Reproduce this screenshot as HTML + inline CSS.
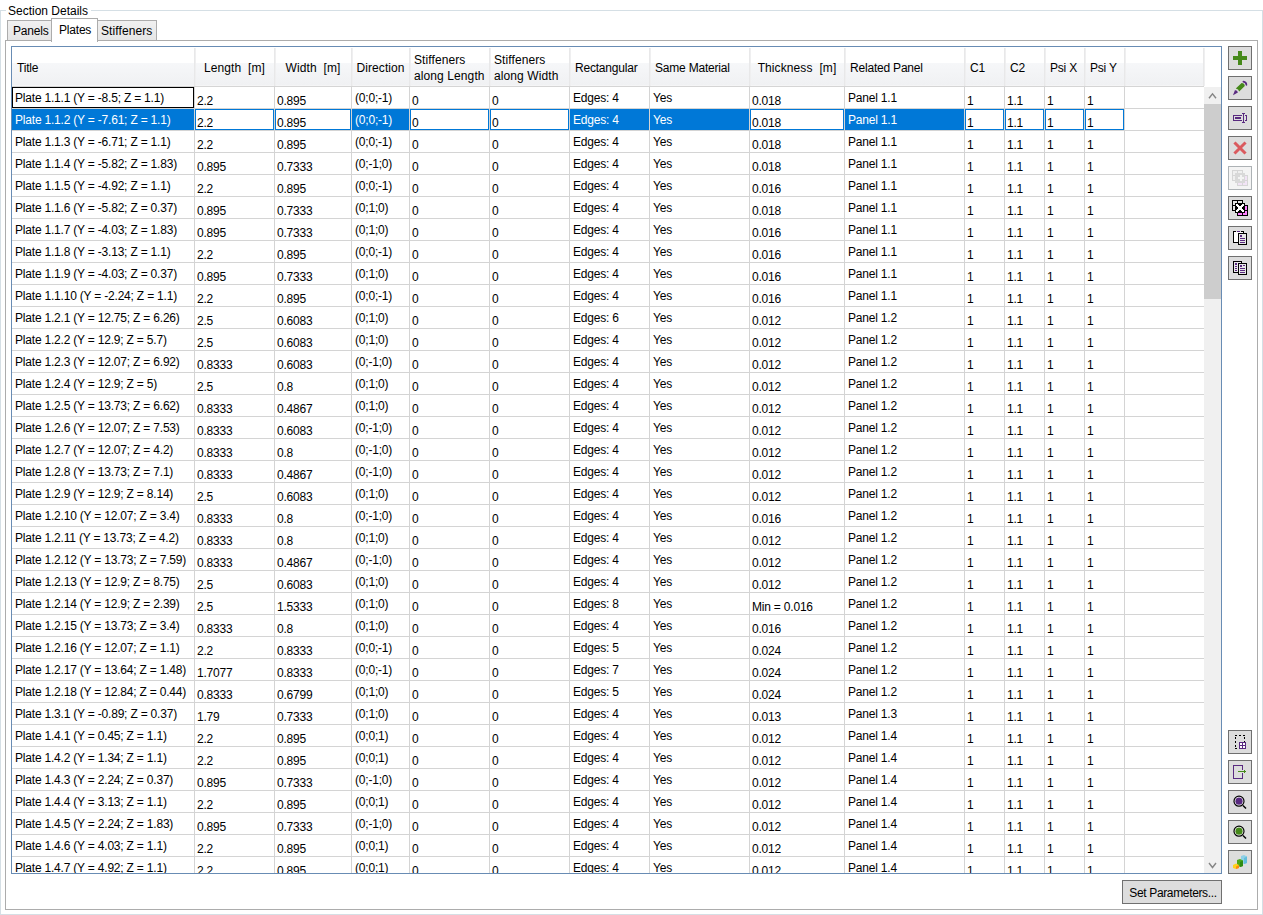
<!DOCTYPE html><html><head><meta charset="utf-8"><style>
*{margin:0;padding:0;box-sizing:border-box}
html,body{width:1263px;height:915px;overflow:hidden;background:#fff}
body{position:relative;font-family:"Liberation Sans",sans-serif;font-size:12px;color:#000}
.a{position:absolute}
.t{position:absolute;white-space:pre;line-height:14px;letter-spacing:-0.2px}
.gl{position:absolute;background:#d4d4d4}
.hs{position:absolute;top:48px;height:38px;width:1px;background:#e8e8e9}
.btn{position:absolute;left:1228px;width:24px;height:24px;border:1px solid #6f6f6f;background:#dddddd}
.btn svg{position:absolute;left:-1px;top:-1px}
</style></head><body><div class="a" style="left:0;top:10px;width:1263px;height:905px;border:1px solid #d5dfe5"></div>
<div class="a" style="left:6px;top:3px;width:85px;height:16px;background:#fff"></div>
<div class="t" style="left:8px;top:4px;letter-spacing:0">Section Details</div>
<div class="a" style="left:5px;top:40px;width:1253px;height:870px;border:1px solid #acacac;background:#fff"></div>
<div class="a" style="left:7px;top:20px;width:45px;height:21px;border:1px solid #acacac;background:linear-gradient(#f0f0f0,#e6e6e6)"></div>
<div class="t" style="left:13px;top:24px">Panels</div>
<div class="a" style="left:97px;top:20px;width:60px;height:21px;border:1px solid #acacac;background:linear-gradient(#f0f0f0,#e6e6e6)"></div>
<div class="t" style="left:101px;top:24px;letter-spacing:0.1px">Stiffeners</div>
<div class="a" style="left:51px;top:18px;width:47px;height:24px;border:1px solid #acacac;border-bottom:none;background:#fff"></div>
<div class="t" style="left:59px;top:23px">Plates</div>
<div class="a" style="left:11px;top:46px;width:1211px;height:828px;border:1px solid #688cb4;background:#fff"></div>
<div class="a" style="left:12px;top:63px;width:1192px;height:22px;background:linear-gradient(#f6f7f9,#f0f1f3)"></div>
<div class="a" style="left:12px;top:85px;width:1192px;height:1px;background:#f5f5f6"></div>
<div class="a" style="left:12px;top:86px;width:1192px;height:1px;background:#d5d5d5"></div>
<div class="hs" style="left:194px"></div><div class="hs" style="left:195px;background:#efeff0"></div>
<div class="hs" style="left:274px"></div><div class="hs" style="left:275px;background:#efeff0"></div>
<div class="hs" style="left:351px"></div><div class="hs" style="left:352px;background:#efeff0"></div>
<div class="hs" style="left:409px"></div><div class="hs" style="left:410px;background:#efeff0"></div>
<div class="hs" style="left:489px"></div><div class="hs" style="left:490px;background:#efeff0"></div>
<div class="hs" style="left:569px"></div><div class="hs" style="left:570px;background:#efeff0"></div>
<div class="hs" style="left:649px"></div><div class="hs" style="left:650px;background:#efeff0"></div>
<div class="hs" style="left:749px"></div><div class="hs" style="left:750px;background:#efeff0"></div>
<div class="hs" style="left:844px"></div><div class="hs" style="left:845px;background:#efeff0"></div>
<div class="hs" style="left:964px"></div><div class="hs" style="left:965px;background:#efeff0"></div>
<div class="hs" style="left:1004px"></div><div class="hs" style="left:1005px;background:#efeff0"></div>
<div class="hs" style="left:1044px"></div><div class="hs" style="left:1045px;background:#efeff0"></div>
<div class="hs" style="left:1084px"></div><div class="hs" style="left:1085px;background:#efeff0"></div>
<div class="hs" style="left:1124px"></div><div class="hs" style="left:1125px;background:#efeff0"></div>
<div class="hs" style="left:1203px"></div><div class="hs" style="left:1204px;background:#efeff0"></div>
<div class="t" style="left:17px;top:61px">Title</div>
<div class="t" style="left:195px;width:79px;text-align:center;top:61px;letter-spacing:0.1px">Length&nbsp;&nbsp;[m]</div>
<div class="t" style="left:275px;width:76px;text-align:center;top:61px;letter-spacing:0.1px">Width&nbsp;&nbsp;[m]</div>
<div class="t" style="left:352px;width:57px;text-align:center;top:61px;letter-spacing:0.1px">Direction</div>
<div class="t" style="left:414px;top:52px;line-height:16px;letter-spacing:0.1px">Stiffeners<br>along Length</div>
<div class="t" style="left:494px;top:52px;line-height:16px;letter-spacing:0.1px">Stiffeners<br>along Width</div>
<div class="t" style="left:575px;top:61px">Rectangular</div>
<div class="t" style="left:655px;top:61px">Same Material</div>
<div class="t" style="left:750px;width:94px;text-align:center;top:61px;letter-spacing:0.1px">Thickness&nbsp;&nbsp;[m]</div>
<div class="t" style="left:850px;top:61px">Related Panel</div>
<div class="t" style="left:970px;top:61px">C1</div>
<div class="t" style="left:1010px;top:61px">C2</div>
<div class="t" style="left:1050px;top:61px">Psi X</div>
<div class="t" style="left:1090px;top:61px">Psi Y</div>
<div class="gl" style="left:12px;top:108px;width:1192px;height:1px"></div>
<div class="gl" style="left:12px;top:130px;width:1192px;height:1px"></div>
<div class="gl" style="left:12px;top:152px;width:1192px;height:1px"></div>
<div class="gl" style="left:12px;top:174px;width:1192px;height:1px"></div>
<div class="gl" style="left:12px;top:196px;width:1192px;height:1px"></div>
<div class="gl" style="left:12px;top:218px;width:1192px;height:1px"></div>
<div class="gl" style="left:12px;top:240px;width:1192px;height:1px"></div>
<div class="gl" style="left:12px;top:262px;width:1192px;height:1px"></div>
<div class="gl" style="left:12px;top:284px;width:1192px;height:1px"></div>
<div class="gl" style="left:12px;top:306px;width:1192px;height:1px"></div>
<div class="gl" style="left:12px;top:328px;width:1192px;height:1px"></div>
<div class="gl" style="left:12px;top:350px;width:1192px;height:1px"></div>
<div class="gl" style="left:12px;top:372px;width:1192px;height:1px"></div>
<div class="gl" style="left:12px;top:394px;width:1192px;height:1px"></div>
<div class="gl" style="left:12px;top:416px;width:1192px;height:1px"></div>
<div class="gl" style="left:12px;top:438px;width:1192px;height:1px"></div>
<div class="gl" style="left:12px;top:460px;width:1192px;height:1px"></div>
<div class="gl" style="left:12px;top:482px;width:1192px;height:1px"></div>
<div class="gl" style="left:12px;top:504px;width:1192px;height:1px"></div>
<div class="gl" style="left:12px;top:526px;width:1192px;height:1px"></div>
<div class="gl" style="left:12px;top:548px;width:1192px;height:1px"></div>
<div class="gl" style="left:12px;top:570px;width:1192px;height:1px"></div>
<div class="gl" style="left:12px;top:592px;width:1192px;height:1px"></div>
<div class="gl" style="left:12px;top:614px;width:1192px;height:1px"></div>
<div class="gl" style="left:12px;top:636px;width:1192px;height:1px"></div>
<div class="gl" style="left:12px;top:658px;width:1192px;height:1px"></div>
<div class="gl" style="left:12px;top:680px;width:1192px;height:1px"></div>
<div class="gl" style="left:12px;top:702px;width:1192px;height:1px"></div>
<div class="gl" style="left:12px;top:724px;width:1192px;height:1px"></div>
<div class="gl" style="left:12px;top:746px;width:1192px;height:1px"></div>
<div class="gl" style="left:12px;top:768px;width:1192px;height:1px"></div>
<div class="gl" style="left:12px;top:790px;width:1192px;height:1px"></div>
<div class="gl" style="left:12px;top:812px;width:1192px;height:1px"></div>
<div class="gl" style="left:12px;top:834px;width:1192px;height:1px"></div>
<div class="gl" style="left:12px;top:856px;width:1192px;height:1px"></div>
<div class="gl" style="left:194px;top:87px;width:1px;height:786px"></div>
<div class="gl" style="left:274px;top:87px;width:1px;height:786px"></div>
<div class="gl" style="left:351px;top:87px;width:1px;height:786px"></div>
<div class="gl" style="left:409px;top:87px;width:1px;height:786px"></div>
<div class="gl" style="left:489px;top:87px;width:1px;height:786px"></div>
<div class="gl" style="left:569px;top:87px;width:1px;height:786px"></div>
<div class="gl" style="left:649px;top:87px;width:1px;height:786px"></div>
<div class="gl" style="left:749px;top:87px;width:1px;height:786px"></div>
<div class="gl" style="left:844px;top:87px;width:1px;height:786px"></div>
<div class="gl" style="left:964px;top:87px;width:1px;height:786px"></div>
<div class="gl" style="left:1004px;top:87px;width:1px;height:786px"></div>
<div class="gl" style="left:1044px;top:87px;width:1px;height:786px"></div>
<div class="gl" style="left:1084px;top:87px;width:1px;height:786px"></div>
<div class="gl" style="left:1124px;top:87px;width:1px;height:786px"></div>
<div class="a" style="left:12px;top:109px;width:182px;height:21px;background:#0078d7"></div>
<div class="a" style="left:352px;top:109px;width:57px;height:21px;background:#0078d7"></div>
<div class="a" style="left:570px;top:109px;width:79px;height:21px;background:#0078d7"></div>
<div class="a" style="left:650px;top:109px;width:99px;height:21px;background:#0078d7"></div>
<div class="a" style="left:845px;top:109px;width:119px;height:21px;background:#0078d7"></div>
<div class="a" style="left:195px;top:109px;width:79px;height:21px;border:1px solid #0078d7;background:#fff"></div>
<div class="a" style="left:275px;top:109px;width:76px;height:21px;border:1px solid #0078d7;background:#fff"></div>
<div class="a" style="left:410px;top:109px;width:79px;height:21px;border:1px solid #0078d7;background:#fff"></div>
<div class="a" style="left:490px;top:109px;width:79px;height:21px;border:1px solid #0078d7;background:#fff"></div>
<div class="a" style="left:750px;top:109px;width:94px;height:21px;border:1px solid #0078d7;background:#fff"></div>
<div class="a" style="left:965px;top:109px;width:39px;height:21px;border:1px solid #0078d7;background:#fff"></div>
<div class="a" style="left:1005px;top:109px;width:39px;height:21px;border:1px solid #0078d7;background:#fff"></div>
<div class="a" style="left:1045px;top:109px;width:39px;height:21px;border:1px solid #0078d7;background:#fff"></div>
<div class="a" style="left:1085px;top:109px;width:39px;height:21px;border:1px solid #0078d7;background:#fff"></div>
<div class="a" style="left:12px;top:87px;width:182px;height:21px;border:1px solid #000"></div>
<div class="t" style="left:15px;top:91px;color:#000">Plate 1.1.1 (Y = -8.5; Z = 1.1)</div>
<div class="t" style="left:197px;top:94px;color:#000">2.2</div>
<div class="t" style="left:277px;top:94px;color:#000">0.895</div>
<div class="t" style="left:355px;top:91px;color:#000">(0;0;-1)</div>
<div class="t" style="left:412px;top:94px;color:#000">0</div>
<div class="t" style="left:492px;top:94px;color:#000">0</div>
<div class="t" style="left:573px;top:91px;color:#000">Edges: 4</div>
<div class="t" style="left:653px;top:91px;color:#000">Yes</div>
<div class="t" style="left:752px;top:94px;color:#000">0.018</div>
<div class="t" style="left:848px;top:91px;color:#000">Panel 1.1</div>
<div class="t" style="left:967px;top:94px;color:#000">1</div>
<div class="t" style="left:1007px;top:94px;color:#000">1.1</div>
<div class="t" style="left:1047px;top:94px;color:#000">1</div>
<div class="t" style="left:1087px;top:94px;color:#000">1</div>
<div class="t" style="left:15px;top:113px;color:#fff">Plate 1.1.2 (Y = -7.61; Z = 1.1)</div>
<div class="t" style="left:197px;top:116px;color:#000">2.2</div>
<div class="t" style="left:277px;top:116px;color:#000">0.895</div>
<div class="t" style="left:355px;top:113px;color:#fff">(0;0;-1)</div>
<div class="t" style="left:412px;top:116px;color:#000">0</div>
<div class="t" style="left:492px;top:116px;color:#000">0</div>
<div class="t" style="left:573px;top:113px;color:#fff">Edges: 4</div>
<div class="t" style="left:653px;top:113px;color:#fff">Yes</div>
<div class="t" style="left:752px;top:116px;color:#000">0.018</div>
<div class="t" style="left:848px;top:113px;color:#fff">Panel 1.1</div>
<div class="t" style="left:967px;top:116px;color:#000">1</div>
<div class="t" style="left:1007px;top:116px;color:#000">1.1</div>
<div class="t" style="left:1047px;top:116px;color:#000">1</div>
<div class="t" style="left:1087px;top:116px;color:#000">1</div>
<div class="t" style="left:15px;top:135px;color:#000">Plate 1.1.3 (Y = -6.71; Z = 1.1)</div>
<div class="t" style="left:197px;top:138px;color:#000">2.2</div>
<div class="t" style="left:277px;top:138px;color:#000">0.895</div>
<div class="t" style="left:355px;top:135px;color:#000">(0;0;-1)</div>
<div class="t" style="left:412px;top:138px;color:#000">0</div>
<div class="t" style="left:492px;top:138px;color:#000">0</div>
<div class="t" style="left:573px;top:135px;color:#000">Edges: 4</div>
<div class="t" style="left:653px;top:135px;color:#000">Yes</div>
<div class="t" style="left:752px;top:138px;color:#000">0.018</div>
<div class="t" style="left:848px;top:135px;color:#000">Panel 1.1</div>
<div class="t" style="left:967px;top:138px;color:#000">1</div>
<div class="t" style="left:1007px;top:138px;color:#000">1.1</div>
<div class="t" style="left:1047px;top:138px;color:#000">1</div>
<div class="t" style="left:1087px;top:138px;color:#000">1</div>
<div class="t" style="left:15px;top:157px;color:#000">Plate 1.1.4 (Y = -5.82; Z = 1.83)</div>
<div class="t" style="left:197px;top:160px;color:#000">0.895</div>
<div class="t" style="left:277px;top:160px;color:#000">0.7333</div>
<div class="t" style="left:355px;top:157px;color:#000">(0;-1;0)</div>
<div class="t" style="left:412px;top:160px;color:#000">0</div>
<div class="t" style="left:492px;top:160px;color:#000">0</div>
<div class="t" style="left:573px;top:157px;color:#000">Edges: 4</div>
<div class="t" style="left:653px;top:157px;color:#000">Yes</div>
<div class="t" style="left:752px;top:160px;color:#000">0.018</div>
<div class="t" style="left:848px;top:157px;color:#000">Panel 1.1</div>
<div class="t" style="left:967px;top:160px;color:#000">1</div>
<div class="t" style="left:1007px;top:160px;color:#000">1.1</div>
<div class="t" style="left:1047px;top:160px;color:#000">1</div>
<div class="t" style="left:1087px;top:160px;color:#000">1</div>
<div class="t" style="left:15px;top:179px;color:#000">Plate 1.1.5 (Y = -4.92; Z = 1.1)</div>
<div class="t" style="left:197px;top:182px;color:#000">2.2</div>
<div class="t" style="left:277px;top:182px;color:#000">0.895</div>
<div class="t" style="left:355px;top:179px;color:#000">(0;0;-1)</div>
<div class="t" style="left:412px;top:182px;color:#000">0</div>
<div class="t" style="left:492px;top:182px;color:#000">0</div>
<div class="t" style="left:573px;top:179px;color:#000">Edges: 4</div>
<div class="t" style="left:653px;top:179px;color:#000">Yes</div>
<div class="t" style="left:752px;top:182px;color:#000">0.016</div>
<div class="t" style="left:848px;top:179px;color:#000">Panel 1.1</div>
<div class="t" style="left:967px;top:182px;color:#000">1</div>
<div class="t" style="left:1007px;top:182px;color:#000">1.1</div>
<div class="t" style="left:1047px;top:182px;color:#000">1</div>
<div class="t" style="left:1087px;top:182px;color:#000">1</div>
<div class="t" style="left:15px;top:201px;color:#000">Plate 1.1.6 (Y = -5.82; Z = 0.37)</div>
<div class="t" style="left:197px;top:204px;color:#000">0.895</div>
<div class="t" style="left:277px;top:204px;color:#000">0.7333</div>
<div class="t" style="left:355px;top:201px;color:#000">(0;1;0)</div>
<div class="t" style="left:412px;top:204px;color:#000">0</div>
<div class="t" style="left:492px;top:204px;color:#000">0</div>
<div class="t" style="left:573px;top:201px;color:#000">Edges: 4</div>
<div class="t" style="left:653px;top:201px;color:#000">Yes</div>
<div class="t" style="left:752px;top:204px;color:#000">0.018</div>
<div class="t" style="left:848px;top:201px;color:#000">Panel 1.1</div>
<div class="t" style="left:967px;top:204px;color:#000">1</div>
<div class="t" style="left:1007px;top:204px;color:#000">1.1</div>
<div class="t" style="left:1047px;top:204px;color:#000">1</div>
<div class="t" style="left:1087px;top:204px;color:#000">1</div>
<div class="t" style="left:15px;top:223px;color:#000">Plate 1.1.7 (Y = -4.03; Z = 1.83)</div>
<div class="t" style="left:197px;top:226px;color:#000">0.895</div>
<div class="t" style="left:277px;top:226px;color:#000">0.7333</div>
<div class="t" style="left:355px;top:223px;color:#000">(0;1;0)</div>
<div class="t" style="left:412px;top:226px;color:#000">0</div>
<div class="t" style="left:492px;top:226px;color:#000">0</div>
<div class="t" style="left:573px;top:223px;color:#000">Edges: 4</div>
<div class="t" style="left:653px;top:223px;color:#000">Yes</div>
<div class="t" style="left:752px;top:226px;color:#000">0.016</div>
<div class="t" style="left:848px;top:223px;color:#000">Panel 1.1</div>
<div class="t" style="left:967px;top:226px;color:#000">1</div>
<div class="t" style="left:1007px;top:226px;color:#000">1.1</div>
<div class="t" style="left:1047px;top:226px;color:#000">1</div>
<div class="t" style="left:1087px;top:226px;color:#000">1</div>
<div class="t" style="left:15px;top:245px;color:#000">Plate 1.1.8 (Y = -3.13; Z = 1.1)</div>
<div class="t" style="left:197px;top:248px;color:#000">2.2</div>
<div class="t" style="left:277px;top:248px;color:#000">0.895</div>
<div class="t" style="left:355px;top:245px;color:#000">(0;0;-1)</div>
<div class="t" style="left:412px;top:248px;color:#000">0</div>
<div class="t" style="left:492px;top:248px;color:#000">0</div>
<div class="t" style="left:573px;top:245px;color:#000">Edges: 4</div>
<div class="t" style="left:653px;top:245px;color:#000">Yes</div>
<div class="t" style="left:752px;top:248px;color:#000">0.016</div>
<div class="t" style="left:848px;top:245px;color:#000">Panel 1.1</div>
<div class="t" style="left:967px;top:248px;color:#000">1</div>
<div class="t" style="left:1007px;top:248px;color:#000">1.1</div>
<div class="t" style="left:1047px;top:248px;color:#000">1</div>
<div class="t" style="left:1087px;top:248px;color:#000">1</div>
<div class="t" style="left:15px;top:267px;color:#000">Plate 1.1.9 (Y = -4.03; Z = 0.37)</div>
<div class="t" style="left:197px;top:270px;color:#000">0.895</div>
<div class="t" style="left:277px;top:270px;color:#000">0.7333</div>
<div class="t" style="left:355px;top:267px;color:#000">(0;1;0)</div>
<div class="t" style="left:412px;top:270px;color:#000">0</div>
<div class="t" style="left:492px;top:270px;color:#000">0</div>
<div class="t" style="left:573px;top:267px;color:#000">Edges: 4</div>
<div class="t" style="left:653px;top:267px;color:#000">Yes</div>
<div class="t" style="left:752px;top:270px;color:#000">0.016</div>
<div class="t" style="left:848px;top:267px;color:#000">Panel 1.1</div>
<div class="t" style="left:967px;top:270px;color:#000">1</div>
<div class="t" style="left:1007px;top:270px;color:#000">1.1</div>
<div class="t" style="left:1047px;top:270px;color:#000">1</div>
<div class="t" style="left:1087px;top:270px;color:#000">1</div>
<div class="t" style="left:15px;top:289px;color:#000">Plate 1.1.10 (Y = -2.24; Z = 1.1)</div>
<div class="t" style="left:197px;top:292px;color:#000">2.2</div>
<div class="t" style="left:277px;top:292px;color:#000">0.895</div>
<div class="t" style="left:355px;top:289px;color:#000">(0;0;-1)</div>
<div class="t" style="left:412px;top:292px;color:#000">0</div>
<div class="t" style="left:492px;top:292px;color:#000">0</div>
<div class="t" style="left:573px;top:289px;color:#000">Edges: 4</div>
<div class="t" style="left:653px;top:289px;color:#000">Yes</div>
<div class="t" style="left:752px;top:292px;color:#000">0.016</div>
<div class="t" style="left:848px;top:289px;color:#000">Panel 1.1</div>
<div class="t" style="left:967px;top:292px;color:#000">1</div>
<div class="t" style="left:1007px;top:292px;color:#000">1.1</div>
<div class="t" style="left:1047px;top:292px;color:#000">1</div>
<div class="t" style="left:1087px;top:292px;color:#000">1</div>
<div class="t" style="left:15px;top:311px;color:#000">Plate 1.2.1 (Y = 12.75; Z = 6.26)</div>
<div class="t" style="left:197px;top:314px;color:#000">2.5</div>
<div class="t" style="left:277px;top:314px;color:#000">0.6083</div>
<div class="t" style="left:355px;top:311px;color:#000">(0;1;0)</div>
<div class="t" style="left:412px;top:314px;color:#000">0</div>
<div class="t" style="left:492px;top:314px;color:#000">0</div>
<div class="t" style="left:573px;top:311px;color:#000">Edges: 6</div>
<div class="t" style="left:653px;top:311px;color:#000">Yes</div>
<div class="t" style="left:752px;top:314px;color:#000">0.012</div>
<div class="t" style="left:848px;top:311px;color:#000">Panel 1.2</div>
<div class="t" style="left:967px;top:314px;color:#000">1</div>
<div class="t" style="left:1007px;top:314px;color:#000">1.1</div>
<div class="t" style="left:1047px;top:314px;color:#000">1</div>
<div class="t" style="left:1087px;top:314px;color:#000">1</div>
<div class="t" style="left:15px;top:333px;color:#000">Plate 1.2.2 (Y = 12.9; Z = 5.7)</div>
<div class="t" style="left:197px;top:336px;color:#000">2.5</div>
<div class="t" style="left:277px;top:336px;color:#000">0.6083</div>
<div class="t" style="left:355px;top:333px;color:#000">(0;1;0)</div>
<div class="t" style="left:412px;top:336px;color:#000">0</div>
<div class="t" style="left:492px;top:336px;color:#000">0</div>
<div class="t" style="left:573px;top:333px;color:#000">Edges: 4</div>
<div class="t" style="left:653px;top:333px;color:#000">Yes</div>
<div class="t" style="left:752px;top:336px;color:#000">0.012</div>
<div class="t" style="left:848px;top:333px;color:#000">Panel 1.2</div>
<div class="t" style="left:967px;top:336px;color:#000">1</div>
<div class="t" style="left:1007px;top:336px;color:#000">1.1</div>
<div class="t" style="left:1047px;top:336px;color:#000">1</div>
<div class="t" style="left:1087px;top:336px;color:#000">1</div>
<div class="t" style="left:15px;top:355px;color:#000">Plate 1.2.3 (Y = 12.07; Z = 6.92)</div>
<div class="t" style="left:197px;top:358px;color:#000">0.8333</div>
<div class="t" style="left:277px;top:358px;color:#000">0.6083</div>
<div class="t" style="left:355px;top:355px;color:#000">(0;-1;0)</div>
<div class="t" style="left:412px;top:358px;color:#000">0</div>
<div class="t" style="left:492px;top:358px;color:#000">0</div>
<div class="t" style="left:573px;top:355px;color:#000">Edges: 4</div>
<div class="t" style="left:653px;top:355px;color:#000">Yes</div>
<div class="t" style="left:752px;top:358px;color:#000">0.012</div>
<div class="t" style="left:848px;top:355px;color:#000">Panel 1.2</div>
<div class="t" style="left:967px;top:358px;color:#000">1</div>
<div class="t" style="left:1007px;top:358px;color:#000">1.1</div>
<div class="t" style="left:1047px;top:358px;color:#000">1</div>
<div class="t" style="left:1087px;top:358px;color:#000">1</div>
<div class="t" style="left:15px;top:377px;color:#000">Plate 1.2.4 (Y = 12.9; Z = 5)</div>
<div class="t" style="left:197px;top:380px;color:#000">2.5</div>
<div class="t" style="left:277px;top:380px;color:#000">0.8</div>
<div class="t" style="left:355px;top:377px;color:#000">(0;1;0)</div>
<div class="t" style="left:412px;top:380px;color:#000">0</div>
<div class="t" style="left:492px;top:380px;color:#000">0</div>
<div class="t" style="left:573px;top:377px;color:#000">Edges: 4</div>
<div class="t" style="left:653px;top:377px;color:#000">Yes</div>
<div class="t" style="left:752px;top:380px;color:#000">0.012</div>
<div class="t" style="left:848px;top:377px;color:#000">Panel 1.2</div>
<div class="t" style="left:967px;top:380px;color:#000">1</div>
<div class="t" style="left:1007px;top:380px;color:#000">1.1</div>
<div class="t" style="left:1047px;top:380px;color:#000">1</div>
<div class="t" style="left:1087px;top:380px;color:#000">1</div>
<div class="t" style="left:15px;top:399px;color:#000">Plate 1.2.5 (Y = 13.73; Z = 6.62)</div>
<div class="t" style="left:197px;top:402px;color:#000">0.8333</div>
<div class="t" style="left:277px;top:402px;color:#000">0.4867</div>
<div class="t" style="left:355px;top:399px;color:#000">(0;1;0)</div>
<div class="t" style="left:412px;top:402px;color:#000">0</div>
<div class="t" style="left:492px;top:402px;color:#000">0</div>
<div class="t" style="left:573px;top:399px;color:#000">Edges: 4</div>
<div class="t" style="left:653px;top:399px;color:#000">Yes</div>
<div class="t" style="left:752px;top:402px;color:#000">0.012</div>
<div class="t" style="left:848px;top:399px;color:#000">Panel 1.2</div>
<div class="t" style="left:967px;top:402px;color:#000">1</div>
<div class="t" style="left:1007px;top:402px;color:#000">1.1</div>
<div class="t" style="left:1047px;top:402px;color:#000">1</div>
<div class="t" style="left:1087px;top:402px;color:#000">1</div>
<div class="t" style="left:15px;top:421px;color:#000">Plate 1.2.6 (Y = 12.07; Z = 7.53)</div>
<div class="t" style="left:197px;top:424px;color:#000">0.8333</div>
<div class="t" style="left:277px;top:424px;color:#000">0.6083</div>
<div class="t" style="left:355px;top:421px;color:#000">(0;-1;0)</div>
<div class="t" style="left:412px;top:424px;color:#000">0</div>
<div class="t" style="left:492px;top:424px;color:#000">0</div>
<div class="t" style="left:573px;top:421px;color:#000">Edges: 4</div>
<div class="t" style="left:653px;top:421px;color:#000">Yes</div>
<div class="t" style="left:752px;top:424px;color:#000">0.012</div>
<div class="t" style="left:848px;top:421px;color:#000">Panel 1.2</div>
<div class="t" style="left:967px;top:424px;color:#000">1</div>
<div class="t" style="left:1007px;top:424px;color:#000">1.1</div>
<div class="t" style="left:1047px;top:424px;color:#000">1</div>
<div class="t" style="left:1087px;top:424px;color:#000">1</div>
<div class="t" style="left:15px;top:443px;color:#000">Plate 1.2.7 (Y = 12.07; Z = 4.2)</div>
<div class="t" style="left:197px;top:446px;color:#000">0.8333</div>
<div class="t" style="left:277px;top:446px;color:#000">0.8</div>
<div class="t" style="left:355px;top:443px;color:#000">(0;-1;0)</div>
<div class="t" style="left:412px;top:446px;color:#000">0</div>
<div class="t" style="left:492px;top:446px;color:#000">0</div>
<div class="t" style="left:573px;top:443px;color:#000">Edges: 4</div>
<div class="t" style="left:653px;top:443px;color:#000">Yes</div>
<div class="t" style="left:752px;top:446px;color:#000">0.012</div>
<div class="t" style="left:848px;top:443px;color:#000">Panel 1.2</div>
<div class="t" style="left:967px;top:446px;color:#000">1</div>
<div class="t" style="left:1007px;top:446px;color:#000">1.1</div>
<div class="t" style="left:1047px;top:446px;color:#000">1</div>
<div class="t" style="left:1087px;top:446px;color:#000">1</div>
<div class="t" style="left:15px;top:465px;color:#000">Plate 1.2.8 (Y = 13.73; Z = 7.1)</div>
<div class="t" style="left:197px;top:468px;color:#000">0.8333</div>
<div class="t" style="left:277px;top:468px;color:#000">0.4867</div>
<div class="t" style="left:355px;top:465px;color:#000">(0;-1;0)</div>
<div class="t" style="left:412px;top:468px;color:#000">0</div>
<div class="t" style="left:492px;top:468px;color:#000">0</div>
<div class="t" style="left:573px;top:465px;color:#000">Edges: 4</div>
<div class="t" style="left:653px;top:465px;color:#000">Yes</div>
<div class="t" style="left:752px;top:468px;color:#000">0.012</div>
<div class="t" style="left:848px;top:465px;color:#000">Panel 1.2</div>
<div class="t" style="left:967px;top:468px;color:#000">1</div>
<div class="t" style="left:1007px;top:468px;color:#000">1.1</div>
<div class="t" style="left:1047px;top:468px;color:#000">1</div>
<div class="t" style="left:1087px;top:468px;color:#000">1</div>
<div class="t" style="left:15px;top:487px;color:#000">Plate 1.2.9 (Y = 12.9; Z = 8.14)</div>
<div class="t" style="left:197px;top:490px;color:#000">2.5</div>
<div class="t" style="left:277px;top:490px;color:#000">0.6083</div>
<div class="t" style="left:355px;top:487px;color:#000">(0;1;0)</div>
<div class="t" style="left:412px;top:490px;color:#000">0</div>
<div class="t" style="left:492px;top:490px;color:#000">0</div>
<div class="t" style="left:573px;top:487px;color:#000">Edges: 4</div>
<div class="t" style="left:653px;top:487px;color:#000">Yes</div>
<div class="t" style="left:752px;top:490px;color:#000">0.012</div>
<div class="t" style="left:848px;top:487px;color:#000">Panel 1.2</div>
<div class="t" style="left:967px;top:490px;color:#000">1</div>
<div class="t" style="left:1007px;top:490px;color:#000">1.1</div>
<div class="t" style="left:1047px;top:490px;color:#000">1</div>
<div class="t" style="left:1087px;top:490px;color:#000">1</div>
<div class="t" style="left:15px;top:509px;color:#000">Plate 1.2.10 (Y = 12.07; Z = 3.4)</div>
<div class="t" style="left:197px;top:512px;color:#000">0.8333</div>
<div class="t" style="left:277px;top:512px;color:#000">0.8</div>
<div class="t" style="left:355px;top:509px;color:#000">(0;-1;0)</div>
<div class="t" style="left:412px;top:512px;color:#000">0</div>
<div class="t" style="left:492px;top:512px;color:#000">0</div>
<div class="t" style="left:573px;top:509px;color:#000">Edges: 4</div>
<div class="t" style="left:653px;top:509px;color:#000">Yes</div>
<div class="t" style="left:752px;top:512px;color:#000">0.016</div>
<div class="t" style="left:848px;top:509px;color:#000">Panel 1.2</div>
<div class="t" style="left:967px;top:512px;color:#000">1</div>
<div class="t" style="left:1007px;top:512px;color:#000">1.1</div>
<div class="t" style="left:1047px;top:512px;color:#000">1</div>
<div class="t" style="left:1087px;top:512px;color:#000">1</div>
<div class="t" style="left:15px;top:531px;color:#000">Plate 1.2.11 (Y = 13.73; Z = 4.2)</div>
<div class="t" style="left:197px;top:534px;color:#000">0.8333</div>
<div class="t" style="left:277px;top:534px;color:#000">0.8</div>
<div class="t" style="left:355px;top:531px;color:#000">(0;1;0)</div>
<div class="t" style="left:412px;top:534px;color:#000">0</div>
<div class="t" style="left:492px;top:534px;color:#000">0</div>
<div class="t" style="left:573px;top:531px;color:#000">Edges: 4</div>
<div class="t" style="left:653px;top:531px;color:#000">Yes</div>
<div class="t" style="left:752px;top:534px;color:#000">0.012</div>
<div class="t" style="left:848px;top:531px;color:#000">Panel 1.2</div>
<div class="t" style="left:967px;top:534px;color:#000">1</div>
<div class="t" style="left:1007px;top:534px;color:#000">1.1</div>
<div class="t" style="left:1047px;top:534px;color:#000">1</div>
<div class="t" style="left:1087px;top:534px;color:#000">1</div>
<div class="t" style="left:15px;top:553px;color:#000">Plate 1.2.12 (Y = 13.73; Z = 7.59)</div>
<div class="t" style="left:197px;top:556px;color:#000">0.8333</div>
<div class="t" style="left:277px;top:556px;color:#000">0.4867</div>
<div class="t" style="left:355px;top:553px;color:#000">(0;-1;0)</div>
<div class="t" style="left:412px;top:556px;color:#000">0</div>
<div class="t" style="left:492px;top:556px;color:#000">0</div>
<div class="t" style="left:573px;top:553px;color:#000">Edges: 4</div>
<div class="t" style="left:653px;top:553px;color:#000">Yes</div>
<div class="t" style="left:752px;top:556px;color:#000">0.012</div>
<div class="t" style="left:848px;top:553px;color:#000">Panel 1.2</div>
<div class="t" style="left:967px;top:556px;color:#000">1</div>
<div class="t" style="left:1007px;top:556px;color:#000">1.1</div>
<div class="t" style="left:1047px;top:556px;color:#000">1</div>
<div class="t" style="left:1087px;top:556px;color:#000">1</div>
<div class="t" style="left:15px;top:575px;color:#000">Plate 1.2.13 (Y = 12.9; Z = 8.75)</div>
<div class="t" style="left:197px;top:578px;color:#000">2.5</div>
<div class="t" style="left:277px;top:578px;color:#000">0.6083</div>
<div class="t" style="left:355px;top:575px;color:#000">(0;1;0)</div>
<div class="t" style="left:412px;top:578px;color:#000">0</div>
<div class="t" style="left:492px;top:578px;color:#000">0</div>
<div class="t" style="left:573px;top:575px;color:#000">Edges: 4</div>
<div class="t" style="left:653px;top:575px;color:#000">Yes</div>
<div class="t" style="left:752px;top:578px;color:#000">0.012</div>
<div class="t" style="left:848px;top:575px;color:#000">Panel 1.2</div>
<div class="t" style="left:967px;top:578px;color:#000">1</div>
<div class="t" style="left:1007px;top:578px;color:#000">1.1</div>
<div class="t" style="left:1047px;top:578px;color:#000">1</div>
<div class="t" style="left:1087px;top:578px;color:#000">1</div>
<div class="t" style="left:15px;top:597px;color:#000">Plate 1.2.14 (Y = 12.9; Z = 2.39)</div>
<div class="t" style="left:197px;top:600px;color:#000">2.5</div>
<div class="t" style="left:277px;top:600px;color:#000">1.5333</div>
<div class="t" style="left:355px;top:597px;color:#000">(0;1;0)</div>
<div class="t" style="left:412px;top:600px;color:#000">0</div>
<div class="t" style="left:492px;top:600px;color:#000">0</div>
<div class="t" style="left:573px;top:597px;color:#000">Edges: 8</div>
<div class="t" style="left:653px;top:597px;color:#000">Yes</div>
<div class="t" style="left:752px;top:600px;color:#000">Min = 0.016</div>
<div class="t" style="left:848px;top:597px;color:#000">Panel 1.2</div>
<div class="t" style="left:967px;top:600px;color:#000">1</div>
<div class="t" style="left:1007px;top:600px;color:#000">1.1</div>
<div class="t" style="left:1047px;top:600px;color:#000">1</div>
<div class="t" style="left:1087px;top:600px;color:#000">1</div>
<div class="t" style="left:15px;top:619px;color:#000">Plate 1.2.15 (Y = 13.73; Z = 3.4)</div>
<div class="t" style="left:197px;top:622px;color:#000">0.8333</div>
<div class="t" style="left:277px;top:622px;color:#000">0.8</div>
<div class="t" style="left:355px;top:619px;color:#000">(0;1;0)</div>
<div class="t" style="left:412px;top:622px;color:#000">0</div>
<div class="t" style="left:492px;top:622px;color:#000">0</div>
<div class="t" style="left:573px;top:619px;color:#000">Edges: 4</div>
<div class="t" style="left:653px;top:619px;color:#000">Yes</div>
<div class="t" style="left:752px;top:622px;color:#000">0.016</div>
<div class="t" style="left:848px;top:619px;color:#000">Panel 1.2</div>
<div class="t" style="left:967px;top:622px;color:#000">1</div>
<div class="t" style="left:1007px;top:622px;color:#000">1.1</div>
<div class="t" style="left:1047px;top:622px;color:#000">1</div>
<div class="t" style="left:1087px;top:622px;color:#000">1</div>
<div class="t" style="left:15px;top:641px;color:#000">Plate 1.2.16 (Y = 12.07; Z = 1.1)</div>
<div class="t" style="left:197px;top:644px;color:#000">2.2</div>
<div class="t" style="left:277px;top:644px;color:#000">0.8333</div>
<div class="t" style="left:355px;top:641px;color:#000">(0;0;-1)</div>
<div class="t" style="left:412px;top:644px;color:#000">0</div>
<div class="t" style="left:492px;top:644px;color:#000">0</div>
<div class="t" style="left:573px;top:641px;color:#000">Edges: 5</div>
<div class="t" style="left:653px;top:641px;color:#000">Yes</div>
<div class="t" style="left:752px;top:644px;color:#000">0.024</div>
<div class="t" style="left:848px;top:641px;color:#000">Panel 1.2</div>
<div class="t" style="left:967px;top:644px;color:#000">1</div>
<div class="t" style="left:1007px;top:644px;color:#000">1.1</div>
<div class="t" style="left:1047px;top:644px;color:#000">1</div>
<div class="t" style="left:1087px;top:644px;color:#000">1</div>
<div class="t" style="left:15px;top:663px;color:#000">Plate 1.2.17 (Y = 13.64; Z = 1.48)</div>
<div class="t" style="left:197px;top:666px;color:#000">1.7077</div>
<div class="t" style="left:277px;top:666px;color:#000">0.8333</div>
<div class="t" style="left:355px;top:663px;color:#000">(0;0;-1)</div>
<div class="t" style="left:412px;top:666px;color:#000">0</div>
<div class="t" style="left:492px;top:666px;color:#000">0</div>
<div class="t" style="left:573px;top:663px;color:#000">Edges: 7</div>
<div class="t" style="left:653px;top:663px;color:#000">Yes</div>
<div class="t" style="left:752px;top:666px;color:#000">0.024</div>
<div class="t" style="left:848px;top:663px;color:#000">Panel 1.2</div>
<div class="t" style="left:967px;top:666px;color:#000">1</div>
<div class="t" style="left:1007px;top:666px;color:#000">1.1</div>
<div class="t" style="left:1047px;top:666px;color:#000">1</div>
<div class="t" style="left:1087px;top:666px;color:#000">1</div>
<div class="t" style="left:15px;top:685px;color:#000">Plate 1.2.18 (Y = 12.84; Z = 0.44)</div>
<div class="t" style="left:197px;top:688px;color:#000">0.8333</div>
<div class="t" style="left:277px;top:688px;color:#000">0.6799</div>
<div class="t" style="left:355px;top:685px;color:#000">(0;1;0)</div>
<div class="t" style="left:412px;top:688px;color:#000">0</div>
<div class="t" style="left:492px;top:688px;color:#000">0</div>
<div class="t" style="left:573px;top:685px;color:#000">Edges: 5</div>
<div class="t" style="left:653px;top:685px;color:#000">Yes</div>
<div class="t" style="left:752px;top:688px;color:#000">0.024</div>
<div class="t" style="left:848px;top:685px;color:#000">Panel 1.2</div>
<div class="t" style="left:967px;top:688px;color:#000">1</div>
<div class="t" style="left:1007px;top:688px;color:#000">1.1</div>
<div class="t" style="left:1047px;top:688px;color:#000">1</div>
<div class="t" style="left:1087px;top:688px;color:#000">1</div>
<div class="t" style="left:15px;top:707px;color:#000">Plate 1.3.1 (Y = -0.89; Z = 0.37)</div>
<div class="t" style="left:197px;top:710px;color:#000">1.79</div>
<div class="t" style="left:277px;top:710px;color:#000">0.7333</div>
<div class="t" style="left:355px;top:707px;color:#000">(0;1;0)</div>
<div class="t" style="left:412px;top:710px;color:#000">0</div>
<div class="t" style="left:492px;top:710px;color:#000">0</div>
<div class="t" style="left:573px;top:707px;color:#000">Edges: 4</div>
<div class="t" style="left:653px;top:707px;color:#000">Yes</div>
<div class="t" style="left:752px;top:710px;color:#000">0.013</div>
<div class="t" style="left:848px;top:707px;color:#000">Panel 1.3</div>
<div class="t" style="left:967px;top:710px;color:#000">1</div>
<div class="t" style="left:1007px;top:710px;color:#000">1.1</div>
<div class="t" style="left:1047px;top:710px;color:#000">1</div>
<div class="t" style="left:1087px;top:710px;color:#000">1</div>
<div class="t" style="left:15px;top:729px;color:#000">Plate 1.4.1 (Y = 0.45; Z = 1.1)</div>
<div class="t" style="left:197px;top:732px;color:#000">2.2</div>
<div class="t" style="left:277px;top:732px;color:#000">0.895</div>
<div class="t" style="left:355px;top:729px;color:#000">(0;0;1)</div>
<div class="t" style="left:412px;top:732px;color:#000">0</div>
<div class="t" style="left:492px;top:732px;color:#000">0</div>
<div class="t" style="left:573px;top:729px;color:#000">Edges: 4</div>
<div class="t" style="left:653px;top:729px;color:#000">Yes</div>
<div class="t" style="left:752px;top:732px;color:#000">0.012</div>
<div class="t" style="left:848px;top:729px;color:#000">Panel 1.4</div>
<div class="t" style="left:967px;top:732px;color:#000">1</div>
<div class="t" style="left:1007px;top:732px;color:#000">1.1</div>
<div class="t" style="left:1047px;top:732px;color:#000">1</div>
<div class="t" style="left:1087px;top:732px;color:#000">1</div>
<div class="t" style="left:15px;top:751px;color:#000">Plate 1.4.2 (Y = 1.34; Z = 1.1)</div>
<div class="t" style="left:197px;top:754px;color:#000">2.2</div>
<div class="t" style="left:277px;top:754px;color:#000">0.895</div>
<div class="t" style="left:355px;top:751px;color:#000">(0;0;1)</div>
<div class="t" style="left:412px;top:754px;color:#000">0</div>
<div class="t" style="left:492px;top:754px;color:#000">0</div>
<div class="t" style="left:573px;top:751px;color:#000">Edges: 4</div>
<div class="t" style="left:653px;top:751px;color:#000">Yes</div>
<div class="t" style="left:752px;top:754px;color:#000">0.012</div>
<div class="t" style="left:848px;top:751px;color:#000">Panel 1.4</div>
<div class="t" style="left:967px;top:754px;color:#000">1</div>
<div class="t" style="left:1007px;top:754px;color:#000">1.1</div>
<div class="t" style="left:1047px;top:754px;color:#000">1</div>
<div class="t" style="left:1087px;top:754px;color:#000">1</div>
<div class="t" style="left:15px;top:773px;color:#000">Plate 1.4.3 (Y = 2.24; Z = 0.37)</div>
<div class="t" style="left:197px;top:776px;color:#000">0.895</div>
<div class="t" style="left:277px;top:776px;color:#000">0.7333</div>
<div class="t" style="left:355px;top:773px;color:#000">(0;-1;0)</div>
<div class="t" style="left:412px;top:776px;color:#000">0</div>
<div class="t" style="left:492px;top:776px;color:#000">0</div>
<div class="t" style="left:573px;top:773px;color:#000">Edges: 4</div>
<div class="t" style="left:653px;top:773px;color:#000">Yes</div>
<div class="t" style="left:752px;top:776px;color:#000">0.012</div>
<div class="t" style="left:848px;top:773px;color:#000">Panel 1.4</div>
<div class="t" style="left:967px;top:776px;color:#000">1</div>
<div class="t" style="left:1007px;top:776px;color:#000">1.1</div>
<div class="t" style="left:1047px;top:776px;color:#000">1</div>
<div class="t" style="left:1087px;top:776px;color:#000">1</div>
<div class="t" style="left:15px;top:795px;color:#000">Plate 1.4.4 (Y = 3.13; Z = 1.1)</div>
<div class="t" style="left:197px;top:798px;color:#000">2.2</div>
<div class="t" style="left:277px;top:798px;color:#000">0.895</div>
<div class="t" style="left:355px;top:795px;color:#000">(0;0;1)</div>
<div class="t" style="left:412px;top:798px;color:#000">0</div>
<div class="t" style="left:492px;top:798px;color:#000">0</div>
<div class="t" style="left:573px;top:795px;color:#000">Edges: 4</div>
<div class="t" style="left:653px;top:795px;color:#000">Yes</div>
<div class="t" style="left:752px;top:798px;color:#000">0.012</div>
<div class="t" style="left:848px;top:795px;color:#000">Panel 1.4</div>
<div class="t" style="left:967px;top:798px;color:#000">1</div>
<div class="t" style="left:1007px;top:798px;color:#000">1.1</div>
<div class="t" style="left:1047px;top:798px;color:#000">1</div>
<div class="t" style="left:1087px;top:798px;color:#000">1</div>
<div class="t" style="left:15px;top:817px;color:#000">Plate 1.4.5 (Y = 2.24; Z = 1.83)</div>
<div class="t" style="left:197px;top:820px;color:#000">0.895</div>
<div class="t" style="left:277px;top:820px;color:#000">0.7333</div>
<div class="t" style="left:355px;top:817px;color:#000">(0;-1;0)</div>
<div class="t" style="left:412px;top:820px;color:#000">0</div>
<div class="t" style="left:492px;top:820px;color:#000">0</div>
<div class="t" style="left:573px;top:817px;color:#000">Edges: 4</div>
<div class="t" style="left:653px;top:817px;color:#000">Yes</div>
<div class="t" style="left:752px;top:820px;color:#000">0.012</div>
<div class="t" style="left:848px;top:817px;color:#000">Panel 1.4</div>
<div class="t" style="left:967px;top:820px;color:#000">1</div>
<div class="t" style="left:1007px;top:820px;color:#000">1.1</div>
<div class="t" style="left:1047px;top:820px;color:#000">1</div>
<div class="t" style="left:1087px;top:820px;color:#000">1</div>
<div class="t" style="left:15px;top:839px;color:#000">Plate 1.4.6 (Y = 4.03; Z = 1.1)</div>
<div class="t" style="left:197px;top:842px;color:#000">2.2</div>
<div class="t" style="left:277px;top:842px;color:#000">0.895</div>
<div class="t" style="left:355px;top:839px;color:#000">(0;0;1)</div>
<div class="t" style="left:412px;top:842px;color:#000">0</div>
<div class="t" style="left:492px;top:842px;color:#000">0</div>
<div class="t" style="left:573px;top:839px;color:#000">Edges: 4</div>
<div class="t" style="left:653px;top:839px;color:#000">Yes</div>
<div class="t" style="left:752px;top:842px;color:#000">0.012</div>
<div class="t" style="left:848px;top:839px;color:#000">Panel 1.4</div>
<div class="t" style="left:967px;top:842px;color:#000">1</div>
<div class="t" style="left:1007px;top:842px;color:#000">1.1</div>
<div class="t" style="left:1047px;top:842px;color:#000">1</div>
<div class="t" style="left:1087px;top:842px;color:#000">1</div>
<div class="t" style="left:15px;top:861px;color:#000">Plate 1.4.7 (Y = 4.92; Z = 1.1)</div>
<div class="t" style="left:197px;top:864px;color:#000">2.2</div>
<div class="t" style="left:277px;top:864px;color:#000">0.895</div>
<div class="t" style="left:355px;top:861px;color:#000">(0;0;1)</div>
<div class="t" style="left:412px;top:864px;color:#000">0</div>
<div class="t" style="left:492px;top:864px;color:#000">0</div>
<div class="t" style="left:573px;top:861px;color:#000">Edges: 4</div>
<div class="t" style="left:653px;top:861px;color:#000">Yes</div>
<div class="t" style="left:752px;top:864px;color:#000">0.012</div>
<div class="t" style="left:848px;top:861px;color:#000">Panel 1.4</div>
<div class="t" style="left:967px;top:864px;color:#000">1</div>
<div class="t" style="left:1007px;top:864px;color:#000">1.1</div>
<div class="t" style="left:1047px;top:864px;color:#000">1</div>
<div class="t" style="left:1087px;top:864px;color:#000">1</div>
<div class="a" style="left:12px;top:874px;width:1209px;height:6px;background:#fff"></div>
<div class="a" style="left:11px;top:873px;width:1211px;height:1px;background:#688cb4"></div>
<div class="a" style="left:1204px;top:87px;width:17px;height:786px;background:#f0f0f0"></div>
<div class="a" style="left:1204px;top:104px;width:17px;height:195px;background:#cdcdcd"></div>
<svg class="a" style="left:1204px;top:87px" width="17" height="17"><path d="M5 11.3 L8.5 6.9 L12 11.3" fill="none" stroke="#858585" stroke-width="1.4"/></svg>
<svg class="a" style="left:1204px;top:855px" width="17" height="17"><path d="M5 8 L8.5 12.5 L12 8" fill="none" stroke="#858585" stroke-width="1.4"/></svg>
<div class="a" style="left:1122px;top:880px;width:100px;height:24px;border:1px solid #707070;background:#dddddd"></div>
<div class="t" style="left:1123px;top:886px;width:100px;text-align:center;letter-spacing:-0.35px">Set Parameters...</div>
<div class="btn" style="top:46px"><svg width="24" height="24" viewBox="0 0 24 24" shape-rendering="crispEdges"><rect x="5" y="10" width="14" height="4" fill="#46891b"/><rect x="10" y="5" width="4" height="14" fill="#46891b"/></svg></div>
<div class="btn" style="top:76px"><svg width="24" height="24" viewBox="0 0 24 24"><path d="M7.8 12.6 L13.6 7.0 Q16.6 7.1 16.8 9.9 L11.2 15.6 Q10.6 13.2 7.8 12.6 Z" fill="#46891b"/><path d="M5 19.2 L6.9 14.2 Q9.2 13.8 9.9 16.6 Z" fill="#592a80"/><path d="M15.4 5.7 Q18.2 6.0 18.4 8.8" fill="none" stroke="#592a80" stroke-width="1.7" stroke-linecap="round"/></svg></div>
<div class="btn" style="top:106px"><svg width="24" height="24" viewBox="0 0 24 24" shape-rendering="crispEdges"><rect x="5" y="9" width="9" height="1" fill="#592a80"/><rect x="5" y="9" width="1" height="6" fill="#592a80"/><rect x="5" y="14" width="9" height="1" fill="#592a80"/><rect x="7" y="11" width="6" height="2" fill="#592a80"/><rect x="15" y="7" width="1" height="10" fill="#592a80"/><rect x="14" y="7" width="3" height="1" fill="#592a80"/><rect x="14" y="16" width="3" height="1" fill="#592a80"/><rect x="17" y="9" width="2" height="1" fill="#592a80"/><rect x="18" y="9" width="1" height="6" fill="#592a80"/><rect x="17" y="14" width="2" height="1" fill="#592a80"/></svg></div>
<div class="btn" style="top:136px"><svg width="24" height="24" viewBox="0 0 24 24"><path d="M7.5 7.5 L16.5 16.5 M16.5 7.5 L7.5 16.5" stroke="#da5a5e" stroke-width="3" stroke-linecap="square"/></svg></div>
<div class="btn" style="top:166px;border-color:#adb2b5;background:#f4f4f4"><svg width="24" height="24" viewBox="0 0 24 24" shape-rendering="crispEdges"><rect x="4" y="4" width="11" height="11" fill="#d6d6d6"/><rect x="5" y="5" width="4" height="2" fill="#f0f0f0"/><rect x="5" y="7" width="2" height="2" fill="#f0f0f0"/><rect x="10" y="5" width="4" height="2" fill="#f0f0f0"/><rect x="5" y="10" width="2" height="4" fill="#f0f0f0"/><rect x="9" y="9" width="11" height="11" fill="#d6d6d6"/><rect x="17" y="10" width="2" height="4" fill="#f2e4f6"/><rect x="10" y="17" width="4" height="2" fill="#f2e4f6"/><rect x="17" y="15" width="2" height="4" fill="#f2e4f6"/><rect x="15" y="17" width="2" height="2" fill="#f2e4f6"/><rect x="7" y="7" width="10" height="10" fill="#d9d9d9"/><rect x="12" y="9" width="2" height="6" fill="#f4f4f4"/><rect x="10" y="11" width="6" height="2" fill="#f4f4f4"/></svg></div>
<div class="btn" style="top:196px"><svg width="24" height="24" viewBox="0 0 24 24" shape-rendering="crispEdges"><rect x="4" y="4" width="11" height="11" fill="#000"/><rect x="5" y="5" width="4" height="2" fill="#e4e4e4"/><rect x="5" y="7" width="2" height="2" fill="#e4e4e4"/><rect x="10" y="5" width="4" height="2" fill="#e4e4e4"/><rect x="5" y="10" width="2" height="4" fill="#e4e4e4"/><rect x="9" y="9" width="11" height="11" fill="#000"/><rect x="17" y="10" width="2" height="4" fill="#ff80ff"/><rect x="10" y="17" width="4" height="2" fill="#ff80ff"/><rect x="17" y="15" width="2" height="4" fill="#ff80ff"/><rect x="15" y="17" width="2" height="2" fill="#ff80ff"/><rect x="7" y="7" width="10" height="10" fill="#000"/><rect x="8" y="8" width="2" height="2" fill="#fff"/><rect x="14" y="8" width="2" height="2" fill="#fff"/><rect x="9" y="9" width="2" height="2" fill="#fff"/><rect x="13" y="9" width="2" height="2" fill="#fff"/><rect x="10" y="10" width="2" height="2" fill="#fff"/><rect x="12" y="10" width="2" height="2" fill="#fff"/><rect x="11" y="11" width="2" height="2" fill="#fff"/><rect x="11" y="11" width="2" height="2" fill="#fff"/><rect x="12" y="12" width="2" height="2" fill="#fff"/><rect x="10" y="12" width="2" height="2" fill="#fff"/><rect x="13" y="13" width="2" height="2" fill="#fff"/><rect x="9" y="13" width="2" height="2" fill="#fff"/><rect x="14" y="14" width="2" height="2" fill="#fff"/><rect x="8" y="14" width="2" height="2" fill="#fff"/></svg></div>
<div class="btn" style="top:226px"><svg width="24" height="24" viewBox="0 0 24 24" shape-rendering="crispEdges"><rect x="5" y="5" width="1" height="12" fill="#000"/><rect x="5" y="16" width="6" height="1" fill="#000"/><rect x="5" y="5" width="3" height="1" fill="#000"/><rect x="13" y="5" width="3" height="1" fill="#000"/><rect x="15" y="5" width="1" height="3" fill="#000"/><rect x="6" y="6" width="9" height="10" fill="#fff"/><rect x="9" y="5" width="3" height="1" fill="#592a80"/><rect x="10" y="7" width="9" height="12" fill="#000"/><rect x="11" y="8" width="7" height="10" fill="#e8e8e8"/><rect x="12" y="9" width="2" height="2" fill="#592a80"/><rect x="12" y="12" width="5" height="1" fill="#592a80"/><rect x="12" y="14" width="5" height="1" fill="#592a80"/><rect x="12" y="16" width="5" height="1" fill="#592a80"/></svg></div>
<div class="btn" style="top:256px"><svg width="24" height="24" viewBox="0 0 24 24" shape-rendering="crispEdges"><rect x="5" y="5" width="9" height="12" fill="#000"/><rect x="6" y="6" width="7" height="10" fill="#e8e8e8"/><rect x="7" y="7" width="2" height="2" fill="#592a80"/><rect x="7" y="10" width="2" height="1" fill="#592a80"/><rect x="7" y="12" width="2" height="1" fill="#592a80"/><rect x="7" y="14" width="2" height="1" fill="#592a80"/><rect x="10" y="7" width="9" height="12" fill="#000"/><rect x="11" y="8" width="7" height="10" fill="#e8e8e8"/><rect x="12" y="9" width="2" height="2" fill="#592a80"/><rect x="15" y="9" width="2" height="1" fill="#592a80"/><rect x="12" y="12" width="5" height="1" fill="#592a80"/><rect x="12" y="14" width="5" height="1" fill="#592a80"/><rect x="12" y="16" width="5" height="1" fill="#592a80"/></svg></div>
<div class="btn" style="top:730px"><svg width="24" height="24" viewBox="0 0 24 24" shape-rendering="crispEdges"><rect x="7" y="5" width="2" height="1" fill="#000"/><rect x="11" y="5" width="2" height="1" fill="#000"/><rect x="15" y="5" width="2" height="1" fill="#000"/><rect x="7" y="7" width="1" height="2" fill="#000"/><rect x="7" y="11" width="1" height="2" fill="#000"/><rect x="7" y="15" width="1" height="2" fill="#000"/><rect x="7" y="18" width="2" height="1" fill="#000"/><rect x="16" y="7" width="1" height="2" fill="#000"/><rect x="16" y="11" width="1" height="2" fill="#000"/><rect x="11" y="12" width="7" height="7" fill="#592a80"/><rect x="12" y="13" width="2" height="2" fill="#fff"/><rect x="15" y="13" width="2" height="2" fill="#fff"/><rect x="12" y="16" width="2" height="2" fill="#fff"/><rect x="15" y="16" width="2" height="2" fill="#fff"/></svg></div>
<div class="btn" style="top:760px"><svg width="24" height="24" viewBox="0 0 24 24" shape-rendering="crispEdges"><rect x="5" y="5" width="10" height="1" fill="#592a80"/><rect x="5" y="5" width="1" height="14" fill="#592a80"/><rect x="5" y="18" width="10" height="1" fill="#592a80"/><rect x="14" y="5" width="1" height="5" fill="#592a80"/><rect x="14" y="13" width="1" height="6" fill="#592a80"/><rect x="10" y="11" width="7" height="1" fill="#46891b"/><rect x="16" y="10" width="1" height="3" fill="#46891b"/><rect x="17" y="11" width="1" height="1" fill="#46891b"/></svg></div>
<div class="btn" style="top:790px"><svg width="24" height="24" viewBox="0 0 24 24"><circle cx="11" cy="11.2" r="5.0" fill="#fff" stroke="#000" stroke-width="1.2"/><circle cx="11" cy="11.2" r="3.6" fill="#592a80"/><path d="M15 15.4 L18 18.4" stroke="#000" stroke-width="1.4"/></svg></div>
<div class="btn" style="top:820px"><svg width="24" height="24" viewBox="0 0 24 24"><circle cx="11" cy="11.2" r="5.0" fill="#fff" stroke="#000" stroke-width="1.2"/><circle cx="11" cy="11.2" r="3.6" fill="#46891b"/><path d="M15 15.4 L18 18.4" stroke="#000" stroke-width="1.4"/></svg></div>
<div class="btn" style="top:850px"><svg width="24" height="24" viewBox="0 0 24 24"><path d="M13 6 L16 5 L19 6.5 L19 13 L16 14 L13 13 Z" fill="#8fd0e6"/><path d="M16 8 L19 6.5 L19 13 L16 14 Z" fill="#62bedc"/><path d="M9 10 L12 9 L15 10.5 L15 16 L12 17 L9 15 Z" fill="#4aa81a"/><path d="M12 12 L15 10.5 L15 16 L12 17 Z" fill="#2f8a12"/><path d="M5 15 L8 13.5 L11 15 L11 18 L8 19 L5 18 Z" fill="#ffd21e"/><path d="M8 16.5 L11 15 L11 18 L8 19 Z" fill="#ff8a10"/></svg></div></body></html>
